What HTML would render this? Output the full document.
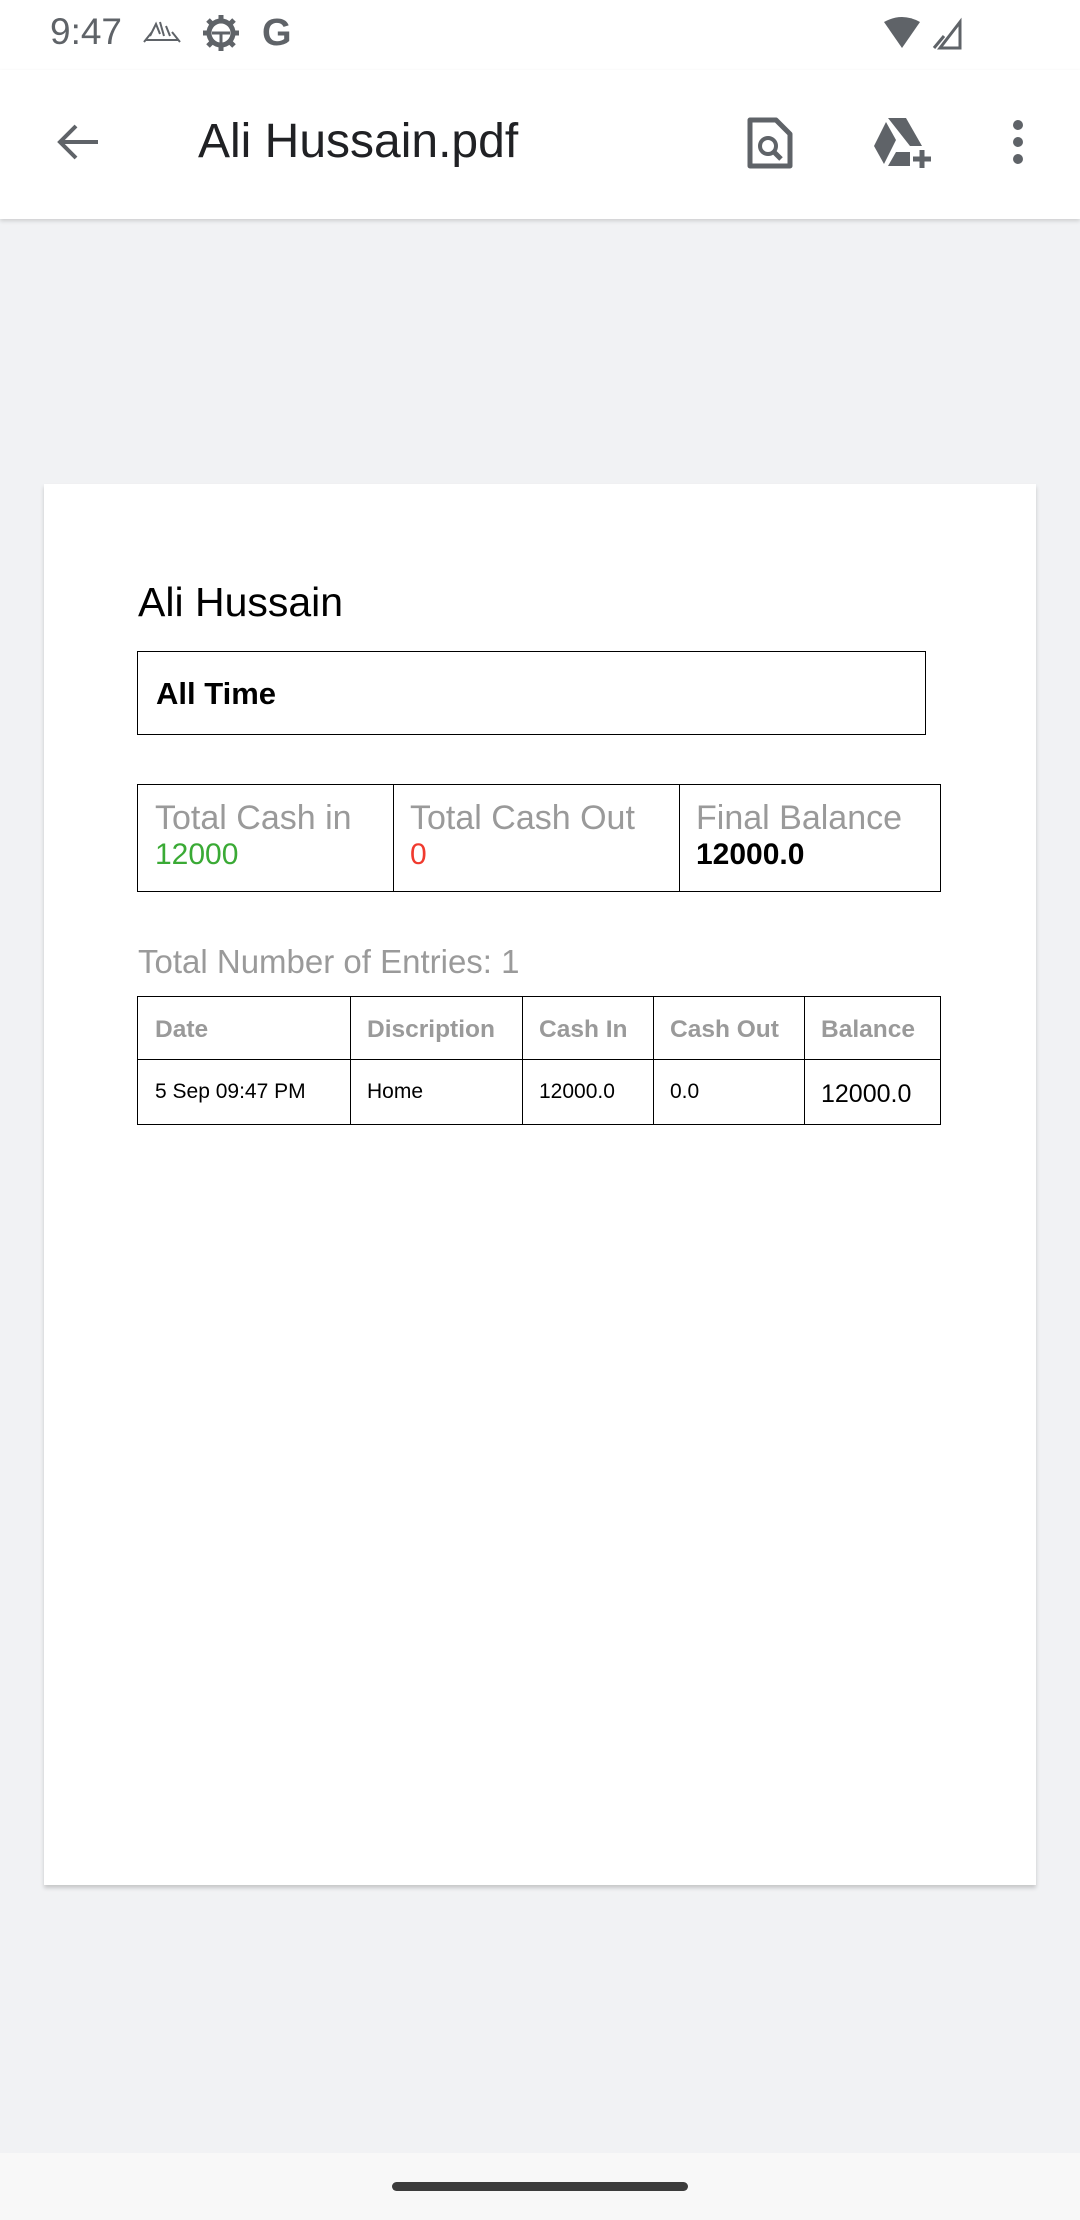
<!DOCTYPE html>
<html><head><meta charset="utf-8"><style>
*{margin:0;padding:0;box-sizing:border-box}
body{width:1080px;height:2220px;background:#f1f2f4;font-family:"Liberation Sans",sans-serif;position:relative;overflow:hidden}
.abs{position:absolute}
.status{left:0;top:0;width:1080px;height:70px;background:#fff}
.appbar{left:0;top:70px;width:1080px;height:149px;background:#fff;box-shadow:0 2px 4px rgba(0,0,0,.15)}
.page{left:44px;top:484px;width:992px;height:1401px;background:#fff;box-shadow:0 3px 4px rgba(0,0,0,.18)}
table{border-collapse:collapse;position:absolute}
td{border:1.5px solid #000;vertical-align:top}
.g{color:#9a9a9a}
</style></head><body>
<div class="abs status">
 <div class="abs" style="left:50px;top:11px;font-size:37px;color:#5f6368">9:47</div>
 <svg class="abs" style="left:142px;top:18px" width="40" height="26" viewBox="0 0 40 26"><path d="M4 22 L36 22 M8 18 L14 6 L18 16 M18 4 L22 18 M24 8 L28 18 M2 24 L10 14 M30 14 L38 24" stroke="#5f6368" stroke-width="2" fill="none"/></svg>
 <svg class="abs" style="left:202px;top:14px" width="38" height="38" viewBox="0 0 38 38"><circle cx="19" cy="19" r="12" fill="none" stroke="#5f6368" stroke-width="5"/><g stroke="#5f6368" stroke-width="5"><path d="M19 1v7M19 30v7M1 19h7M30 19h7M6 6l5 5M27 27l5 5M6 32l5-5M27 11l5-5"/></g><path d="M10 19h18M19 19v10" stroke="#5f6368" stroke-width="3"/></svg>
 <div class="abs" style="left:262px;top:12px;font-size:38px;font-weight:bold;color:#5f6368">G</div>
 <svg class="abs" style="left:882px;top:16px" width="80" height="34" viewBox="0 0 80 34"><path d="M2 6 Q20 -4 38 6 L20 32Z" fill="#5f6368"/><path d="M58 32 L78 6 L78 32Z" fill="none" stroke="#5f6368" stroke-width="3"/><path d="M52 32L62 20" stroke="#5f6368" stroke-width="3"/></svg>
</div>
<div class="abs appbar">
 <svg class="abs" style="left:54px;top:52px" width="48" height="40" viewBox="0 0 48 40"><path d="M44 20H6M22 4L6 20L22 36" stroke="#5f6368" stroke-width="4" fill="none"/></svg>
 <div class="abs" style="left:198px;top:44px;font-size:48px;color:#202124">Ali Hussain.pdf</div>
 <svg class="abs" style="left:746px;top:46px" width="50" height="54" viewBox="0 0 50 54"><path d="M4 4h26l14 14v32H4z" fill="none" stroke="#5f6368" stroke-width="5" stroke-linejoin="round"/><circle cx="22" cy="30" r="8" fill="none" stroke="#5f6368" stroke-width="4"/><path d="M28 36l7 7" stroke="#5f6368" stroke-width="5"/></svg>
 <svg class="abs" style="left:872px;top:46px" width="62" height="54" viewBox="0 0 62 54"><path d="M16 2h18l16 28H38z" fill="#5f6368"/><path d="M14 6l10 18L12 48 2 30z" fill="#5f6368"/><path d="M16 50l8-14h14v14z" fill="#5f6368"/><path d="M50 34v18M41 43h18" stroke="#5f6368" stroke-width="5"/></svg>
 <svg class="abs" style="left:1010px;top:48px" width="16" height="50" viewBox="0 0 16 50"><circle cx="8" cy="7" r="5" fill="#5f6368"/><circle cx="8" cy="24" r="5" fill="#5f6368"/><circle cx="8" cy="41" r="5" fill="#5f6368"/></svg>
</div>
<div class="abs page"></div>
<div class="abs" style="left:138px;top:579px;font-size:41px;color:#000">Ali Hussain</div>
<div class="abs" style="left:137px;top:651px;width:789px;height:84px;border:1.5px solid #000"><div class="abs" style="left:18px;top:24px;font-size:31px;font-weight:bold">All Time</div></div>
<table style="left:137px;top:784px;width:804px;height:108px;font-size:34px">
<tr><td style="width:256px;padding:14px 0 0 17px"><div class="g">Total Cash in</div><div style="color:#3aaa35;font-size:30px">12000</div></td>
<td style="width:286px;padding:14px 0 0 16px"><div class="g">Total Cash Out</div><div style="color:#f03a2e;font-size:30px">0</div></td>
<td style="padding:14px 0 0 16px"><div class="g">Final Balance</div><div style="font-weight:bold;font-size:30px">12000.0</div></td></tr></table>
<div class="abs g" style="left:138px;top:943px;font-size:33px">Total Number of Entries: 1</div>
<table style="left:137px;top:996px;width:804px;font-size:21px">
<tr style="height:63px" class="g"><td style="width:213px;padding:19px 0 0 17px;font-weight:bold;font-size:24.5px">Date</td><td style="width:172px;padding:19px 0 0 16px;font-weight:bold;font-size:24.5px">Discription</td><td style="width:131px;padding:19px 0 0 16px;font-weight:bold;font-size:24.5px">Cash In</td><td style="width:151px;padding:19px 0 0 16px;font-weight:bold;font-size:24.5px">Cash Out</td><td style="padding:19px 0 0 16px;font-weight:bold;font-size:24.5px">Balance</td></tr>
<tr style="height:65px"><td style="padding:20px 0 0 17px">5 Sep 09:47 PM</td><td style="padding:20px 0 0 16px">Home</td><td style="padding:20px 0 0 16px">12000.0</td><td style="padding:20px 0 0 16px">0.0</td><td style="padding:20px 0 0 16px;font-size:25px">12000.0</td></tr></table>
<div class="abs" style="left:0;top:2153px;width:1080px;height:67px;background:#f8f8f8"></div>
<div class="abs" style="left:392px;top:2182px;width:296px;height:9px;border-radius:5px;background:#3c3c3c"></div>
</body></html>
